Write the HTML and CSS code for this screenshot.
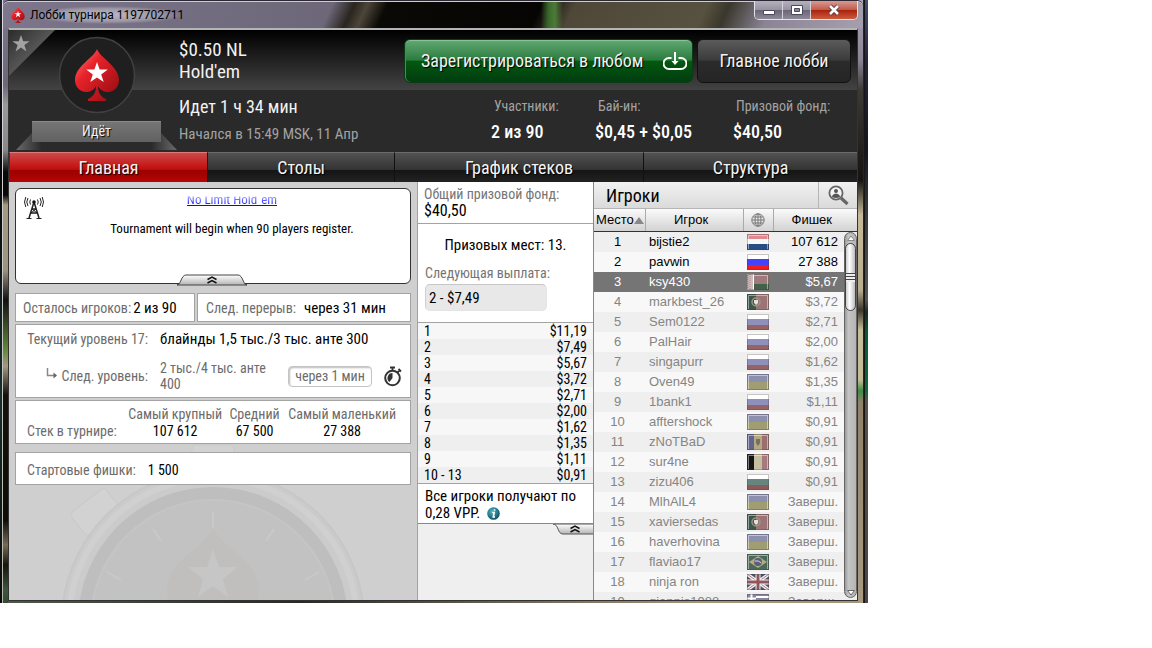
FILE: index.html
```
<!DOCTYPE html>
<html lang="ru">
<head>
<meta charset="utf-8">
<title>Лобби турнира 1197702711</title>
<link rel="stylesheet" href="styles.css">
</head>
<body>
<svg class="defs" aria-hidden="true">
  <defs>
    <linearGradient id="red" x1="0" y1="0" x2="1" y2="1"><stop offset="0" stop-color="#ff8a80"/><stop offset=".35" stop-color="#e8222a"/><stop offset="1" stop-color="#8f0b10"/></linearGradient>
    <linearGradient id="corner" x1="0" y1="0" x2="1" y2="1"><stop offset="0" stop-color="#2c2c2c"/><stop offset=".5" stop-color="#565656"/></linearGradient>
    <linearGradient id="ribbon" x1="0" y1="0" x2="0" y2="1"><stop offset="0" stop-color="#767676"/><stop offset="1" stop-color="#616161"/></linearGradient>
    <linearGradient id="tail" x1="0" y1="0" x2="1" y2="0"><stop offset="0" stop-color="#6a6a6a"/><stop offset="1" stop-color="#2c2c2c"/></linearGradient>
    <linearGradient id="tail2" x1="1" y1="0" x2="0" y2="0"><stop offset="0" stop-color="#6a6a6a"/><stop offset="1" stop-color="#2c2c2c"/></linearGradient>
    <linearGradient id="grip" x1="0" y1="0" x2="0" y2="1"><stop offset="0" stop-color="#fff"/><stop offset="1" stop-color="#b4b4b4"/></linearGradient>
    <radialGradient id="info" cx=".4" cy=".35" r=".7"><stop offset="0" stop-color="#4fb6c6"/><stop offset="1" stop-color="#0b4a5e"/></radialGradient>
    <path id="gloss" d="M1.500 15V1.500h19V15" fill="none" stroke="#fff" stroke-opacity=".45"/>
    <symbol id="spade" viewBox="0 0 46 52"><path d="M23 0C26 9 45 17 45 31c0 8-6 12-11 12-4 0-8-2-10-6 0 7 3 11 8 13v2H14v-2c5-2 8-6 8-13-2 4-6 6-10 6C7 43 1 39 1 31 1 17 20 9 23 0z" fill="url(#red)"/><path d="M23 13l2.600 7.600h8.200l-6.600 4.800 2.500 7.700-6.700-4.700-6.700 4.700 2.500-7.700-6.600-4.800h8.200z" fill="#fff"/></symbol>
    <symbol id="ru" viewBox="0 0 22 16"><path fill="#fff" d="M0 0h22v5H0z"/><path fill="#9090bd" d="M0 5h22v6H0z"/><path fill="#976464" d="M0 11h22v5H0z"/></symbol>
    <symbol id="ru-on" viewBox="0 0 22 16"><path fill="#fff" d="M0 0h22v5H0z"/><path fill="#4343fb" d="M0 5h22v6H0z"/><path fill="#f31b1b" d="M0 11h22v5H0z"/></symbol>
    <symbol id="nl" viewBox="0 0 22 16"><path fill="#df8a90" d="M0 0h22v5H0z"/><path fill="#f4f6f7" d="M0 5h22v5H0z"/><path fill="#274c85" d="M0 10h22v6H0z"/><use href="#gloss"/></symbol>
    <symbol id="by" viewBox="0 0 22 16"><path fill="#9d7b7c" d="M0 0h22v10H0z"/><path fill="#436048" d="M0 10h22v6H0z"/><use href="#gloss"/><path fill="#cdbcbc" d="M0 0h6v16H0z"/><path d="M1 1v14M3 0v16" stroke="#a98585" stroke-dasharray="1 1"/><path fill="#fff" d="M6 0h1v16H6z"/></symbol>
    <symbol id="pt" viewBox="0 0 22 16"><path fill="#9d7476" d="M0 0h22v16H0z"/><path fill="#3c564b" d="M0 0h9v16H0z"/><circle cx="9" cy="8" r="4" fill="none" stroke="#99987a" stroke-width="1.500"/><path fill="#e4dfe4" d="M7 6h4v3l-2 2-2-2z"/><use href="#gloss"/></symbol>
    <symbol id="ua" viewBox="0 0 22 16"><path fill="#8d8fae" d="M0 0h22v8H0z"/><path fill="#a19d72" d="M0 8h22v8H0z"/><use href="#gloss"/></symbol>
    <symbol id="md" viewBox="0 0 22 16"><path fill="#61658d" d="M0 0h7v16H0z"/><path fill="#b3aa82" d="M7 0h8v16H7z"/><path fill="#9b6e70" d="M15 0h7v16h-7z"/><path fill="#78705c" d="M9 5h4v4l-2 3-2-3z"/><use href="#gloss"/></symbol>
    <symbol id="be" viewBox="0 0 22 16"><path fill="#151515" d="M0 0h7v16H0z"/><path fill="#c4bfa0" d="M7 0h8v16H7z"/><path fill="#a5797e" d="M15 0h7v16h-7z"/><use href="#gloss"/></symbol>
    <symbol id="bg" viewBox="0 0 22 16"><path fill="#fff" d="M0 0h22v5H0z"/><path fill="#668580" d="M0 5h22v6H0z"/><path fill="#8d5959" d="M0 11h22v5H0z"/></symbol>
    <symbol id="br" viewBox="0 0 22 16"><path fill="#49695a" d="M0 0h22v16H0z"/><path fill="#b6aa7d" d="M11 2l9 6-9 6-9-6z"/><circle cx="11" cy="8" r="4" fill="#59607e"/><path d="M7.500 7q4-1 7 2" stroke="#d7d8de" fill="none"/><use href="#gloss"/></symbol>
    <symbol id="gb" viewBox="0 0 22 16"><path fill="#4a5068" d="M0 0h22v16H0z"/><path d="M0 0l22 16M22 0L0 16" stroke="#f0eff1" stroke-width="3.500"/><path d="M0 0l22 16M22 0L0 16" stroke="#a67a7f"/><path d="M11 0v16M0 8h22" stroke="#f4f3f4" stroke-width="5"/><path d="M11 0v16M0 8h22" stroke="#91565b" stroke-width="3"/></symbol>
    <symbol id="gr" viewBox="0 0 22 16"><path fill="#fff" d="M0 0h22v16H0z"/><path d="M0 1h22M0 5h22M0 9h22M0 13h22" stroke="#8686a2" stroke-width="2"/><path fill="#8686a2" d="M0 0h9v9H0z"/><path d="M4.500 0v9M0 4.500h9" stroke="#fff" stroke-width="2"/></symbol>
  </defs>
</svg>
<div class="window">
  <header class="titlebar">
    <svg class="app-icon" viewBox="0 0 46 52"><use href="#spade"/></svg>
    <h1 class="caption">Лобби турнира 1197702711</h1>
    <div class="window-buttons">
      <button class="wb" aria-label="Свернуть"><svg width="14" height="12" viewBox="0 0 14 12"><path d="M1.500 6.500h11v4h-11z" fill="#fff" stroke="#4a4a5c"/></svg></button>
      <button class="wb" aria-label="Развернуть"><svg width="14" height="12" viewBox="0 0 14 12"><path d="M1.500 1.500h11v9h-11z" fill="#fff" stroke="#4a4a5c"/><path d="M4.500 4.500h5v3h-5z" fill="#8a8795" stroke="#4a4a5c"/></svg></button>
      <button class="wb wb-close" aria-label="Закрыть"><svg width="14" height="12" viewBox="0 0 14 12"><path d="M3 2l8 8M11 2l-8 8" stroke="#54353c" stroke-width="4.500"/><path d="M3 2l8 8M11 2l-8 8" stroke="#fff" stroke-width="2.600"/></svg></button>
    </div>
  </header>

  <main class="client">
    <section class="summary">
      <div class="emblem">
        <svg class="emblem-art" viewBox="0 0 170 122" aria-hidden="true">
          <path d="M0 0h46L0 46z" fill="url(#corner)"/>
          <path d="M12 5l2.200 6.200h6.400l-5.200 3.900 2 6.300-5.400-3.800-5.400 3.800 2-6.300-5.200-3.900h6.400z" fill="#a3a3a3"/>
          <circle cx="88" cy="45" r="37.500" fill="#1f1f1f" stroke="#414141" stroke-width="1.500"/>
          <use href="#spade" x="65" y="19" width="46" height="52"/>
          <path d="M7 120l16-17v9h9v8z" fill="url(#tail)"/>
          <path d="M168 120l-16-17v9h-9v8z" fill="url(#tail2)"/>
          <path d="M23 91.500h129V112H23z" fill="url(#ribbon)"/><path d="M23 91.500h129" stroke="#8a8a8a"/>
        </svg>
        <span class="status">Идёт</span>
      </div>
      <div class="summary-top">
        <h2 class="game">$0.50 NL<br>Hold'em</h2>
        <div class="actions">
          <button class="btn btn-register">Зарегистрироваться в любом
            <svg width="24" height="19" viewBox="0 0 24 19" fill="none" stroke="#fff" stroke-width="2"><path d="M8.500 6H6a5 5 0 0 0 0 11h12a5 5 0 0 0 0-11h-2.500M12 0v10"/><path d="M8.500 9h7L12 13z" fill="#fff" stroke="none"/></svg>
          </button>
          <button class="btn btn-lobby">Главное лобби</button>
        </div>
      </div>
      <div class="summary-bottom">
        <div class="timing">
          <p class="running">Идет 1 ч 34 мин</p>
          <p class="started">Начался в 15:49 MSK, 11 Апр</p>
        </div>
        <dl class="stats">
          <div><dt>Участники:</dt><dd>2 из 90</dd></div>
          <div><dt>Бай-ин:</dt><dd>$0,45 + $0,05</dd></div>
          <div><dt>Призовой фонд:</dt><dd>$40,50</dd></div>
        </dl>
      </div>
    </section>

    <nav class="tabs">
      <button class="tab tab-main active">Главная</button>
      <button class="tab tab-tables">Столы</button>
      <button class="tab tab-chart">График стеков</button>
      <button class="tab tab-structure">Структура</button>
    </nav>

    <div class="columns">
      <section class="details">
        <svg class="watermark" viewBox="0 0 408 418" preserveAspectRatio="xMidYMax slice" aria-hidden="true">
          <g fill="#d2d2d2" stroke="#c9c9c9"><rect x="183" y="263" width="42" height="40" rx="3"/><rect x="77" y="310" width="28" height="44" rx="4" transform="rotate(52 91 326)"/></g>
          <circle cx="204" cy="440" r="151" fill="#cbcbcb" stroke="#c7c7c7" stroke-width="2"/>
          <circle cx="204" cy="440" r="144" fill="none" stroke="#d0d0d0" stroke-width="6"/>
          <circle cx="204" cy="440" r="135" fill="#bebebe"/>
          <circle cx="204" cy="440" r="122" fill="#c2c2c2" stroke="#c5c5c5" stroke-width="2"/>
          <path d="M204 330v24M144 347l8 12M265 347l-8 12M98 390l14 8M310 390l-14 8" stroke="#c9c9c9" stroke-width="2"/>
          <path d="M204 345c7 20 46 34 46 62 0 18-10 25-22 25h-48c-12 0-22-7-22-25 0-28 39-42 46-62z" fill="#c1bfbe"/>
          <path d="M204 367l6 18h19l-15 12 5 18-15-11-15 11 5-18-15-12h19z" fill="#c6c6c6"/>
        </svg>

        <div class="news">
          <svg class="antenna" width="20" height="24" viewBox="0 0 20 24" fill="none" stroke="#222"><path d="M10 6L5 22M10 6l5 16M8 13h4M7 17h6" stroke-width="1.500"/><path d="M8 13l5 4M12 13l-5 4M2.500 22.500h5M12.500 22.500h5"/><circle cx="10" cy="6" r="1.800" fill="#111" stroke="none"/><path d="M6.500 3.500q-1.500 2.500 0 5M13.500 3.500q1.500 2.500 0 5M4 2q-2.500 4 0 8M16 2q2.500 4 0 8M1.800 1q-2.600 5 0 10M18.200 1q2.600 5 0 10"/></svg>
          <div class="news-body">
            <a class="news-link" href="#rules">No Limit Hold`em</a>
            <p>Tournament will begin when 90 players register.</p>
          </div>
          <button class="collapse" aria-label="Свернуть новости"><svg width="70" height="12" viewBox="0 0 70 12"><path d="M0 11c4 0 4-10 9-10h52c5 0 5 10 9 10z" fill="url(#grip)" stroke="#444"/><path d="M30.500 5.500L35 3l4.500 2.500M30.500 9L35 6.500 39.500 9" fill="none" stroke="#111" stroke-width="1.500"/></svg></button>
        </div>

        <div class="pair">
          <p class="card remaining"><span>Осталось игроков:</span> <b>2 из 90</b></p>
          <p class="card break"><span>След. перерыв:</span> <b>через 31 мин</b></p>
        </div>

        <div class="card levels">
          <span class="level-label">Текущий уровень 17:</span><b class="level-now">блайнды 1,5 тыс./3 тыс. анте 300</b>
          <span class="level-label"><svg width="12" height="12" viewBox="0 0 12 12" fill="none" stroke="#888" stroke-width="1.500"><path d="M1.500 0v7.500H10"/><path d="M7.500 4.500L11 7.500l-3.500 3z" fill="#666" stroke="none"/></svg>След. уровень:</span>
          <span class="level-next">2 тыс./4 тыс. анте 400</span>
          <span class="countdown">через 1 мин</span>
          <svg class="stopwatch" width="18" height="21" viewBox="0 0 18 21" fill="none" stroke="#333"><circle cx="8.500" cy="12" r="7.300" stroke-width="2"/><path d="M8.500 7v5l-3 4A5 5 0 0 1 8.500 7z" fill="#333" stroke="none"/><path d="M6 1.500h5M8.500 1v4M14.500 3l2.500 2.500M13.500 6.500L16 4" stroke-width="1.800"/></svg>
        </div>

        <table class="card stacks">
          <tr><td></td><th>Самый крупный</th><th>Средний</th><th>Самый маленький</th></tr>
          <tr><th class="stack-label">Стек в турнире:</th><td>107 612</td><td>67 500</td><td>27 388</td></tr>
        </table>

        <p class="card chips"><span>Стартовые фишки:</span> <b>1 500</b></p>
      </section>

      <section class="prizes">
        <div class="pool"><span class="muted">Общий призовой фонд:</span><strong>$40,50</strong></div>
        <p class="places">Призовых мест: 13.</p>
        <div class="next-payout"><label class="muted" for="payout">Следующая выплата:</label><input id="payout" class="payout-field" value="2 - $7,49" readonly></div>
        <table class="payouts">
          <tr><td>1</td><td>$11,19</td></tr>
          <tr><td>2</td><td>$7,49</td></tr>
          <tr><td>3</td><td>$5,67</td></tr>
          <tr><td>4</td><td>$3,72</td></tr>
          <tr><td>5</td><td>$2,71</td></tr>
          <tr><td>6</td><td>$2,00</td></tr>
          <tr><td>7</td><td>$1,62</td></tr>
          <tr><td>8</td><td>$1,35</td></tr>
          <tr><td>9</td><td>$1,11</td></tr>
          <tr><td>10 - 13</td><td>$0,91</td></tr>
        </table>
        <p class="vpp">Все игроки получают по 0,28 VPP. <svg width="13" height="13" viewBox="0 0 13 13"><circle cx="6.500" cy="6.500" r="6.300" fill="url(#info)"/><path d="M7.600 2.200v1.600M5.200 5.500h2L6.300 10H8" stroke="#fff" stroke-width="1.600" fill="none"/></svg></p>
        <button class="fold" aria-label="Свернуть"><svg width="40" height="11" viewBox="0 0 40 11"><path d="M0 0c6 0 4 10 10 10h31V0z" fill="url(#grip)" stroke="#555"/><path d="M17.500 4.500L22 2l4.500 2.500M17.500 8L22 5.500 26.500 8" fill="none" stroke="#111" stroke-width="1.500"/></svg></button>
      </section>

      <section class="players">
        <div class="players-head">
          <h2>Игроки</h2>
          <button class="search" aria-label="Найти игрока"><svg width="21" height="21" viewBox="0 0 21 21" fill="none" stroke="#666"><path d="M13 13l6.500 6" stroke-width="3.200"/><circle cx="8" cy="8" r="6.600" fill="#f4f4f4" stroke-width="1.800"/><circle cx="8" cy="6" r="2" fill="#555" stroke="none"/><path d="M4 12q0-3 4-3.500Q12 9 12 12 8 14 4 12z" fill="#555" stroke="none"/></svg></button>
        </div>
        <table class="roster">
          <thead><tr><th>Место<i class="sort"></i></th><th>Игрок</th><th><svg width="14" height="14" viewBox="0 0 14 14" fill="none" stroke="#777"><circle cx="7" cy="7" r="6.200"/><ellipse cx="7" cy="7" rx="3" ry="6.200"/><path d="M7 1v12M1 7h12M2 4h10M2 10h10"/></svg></th><th>Фишек</th></tr></thead>
          <tbody>
            <tr class="live"><td>1</td><td>bijstie2</td><td><svg class="flag"><use href="#nl"/></svg></td><td>107 612</td></tr>
            <tr class="live"><td>2</td><td>pavwin</td><td><svg class="flag"><use href="#ru-on"/></svg></td><td>27 388</td></tr>
            <tr class="selected"><td>3</td><td>ksy430</td><td><svg class="flag"><use href="#by"/></svg></td><td>$5,67</td></tr>
            <tr><td>4</td><td>markbest_26</td><td><svg class="flag"><use href="#pt"/></svg></td><td>$3,72</td></tr>
            <tr><td>5</td><td>Sem0122</td><td><svg class="flag"><use href="#ru"/></svg></td><td>$2,71</td></tr>
            <tr><td>6</td><td>PalHair</td><td><svg class="flag"><use href="#ru"/></svg></td><td>$2,00</td></tr>
            <tr><td>7</td><td>singapurr</td><td><svg class="flag"><use href="#ru"/></svg></td><td>$1,62</td></tr>
            <tr><td>8</td><td>Oven49</td><td><svg class="flag"><use href="#ua"/></svg></td><td>$1,35</td></tr>
            <tr><td>9</td><td>1bank1</td><td><svg class="flag"><use href="#ru"/></svg></td><td>$1,11</td></tr>
            <tr><td>10</td><td>afftershock</td><td><svg class="flag"><use href="#ua"/></svg></td><td>$0,91</td></tr>
            <tr><td>11</td><td>zNoTBaD</td><td><svg class="flag"><use href="#md"/></svg></td><td>$0,91</td></tr>
            <tr><td>12</td><td>sur4ne</td><td><svg class="flag"><use href="#be"/></svg></td><td>$0,91</td></tr>
            <tr><td>13</td><td>zizu406</td><td><svg class="flag"><use href="#bg"/></svg></td><td>$0,91</td></tr>
            <tr><td>14</td><td>MlhAlL4</td><td><svg class="flag"><use href="#ua"/></svg></td><td>Заверш.</td></tr>
            <tr><td>15</td><td>xaviersedas</td><td><svg class="flag"><use href="#pt"/></svg></td><td>Заверш.</td></tr>
            <tr><td>16</td><td>haverhovina</td><td><svg class="flag"><use href="#ua"/></svg></td><td>Заверш.</td></tr>
            <tr><td>17</td><td>flaviao17</td><td><svg class="flag"><use href="#br"/></svg></td><td>Заверш.</td></tr>
            <tr><td>18</td><td>ninja ron</td><td><svg class="flag"><use href="#gb"/></svg></td><td>Заверш.</td></tr>
            <tr><td>19</td><td>giannis1988</td><td><svg class="flag"><use href="#gr"/></svg></td><td>Заверш.</td></tr>
          </tbody>
        </table>
        <div class="scrollbar"><svg width="10" height="9" viewBox="0 0 10 9"><path d="M1.500 6.500L5 2l3.500 4.500z" fill="#fff" stroke="#888"/></svg><span class="thumb"></span><svg class="down" width="10" height="9" viewBox="0 0 10 9"><path d="M1.500 2.500L5 7l3.500-4.500z" fill="#fff" stroke="#666"/></svg></div>
      </section>
    </div>
  </main>
</div>
</body>
</html>
```
FILE: styles.css
```
* { box-sizing: border-box; }
body {
  margin: 0;
  padding-right: 284px;
  background: #fff;
  color: #000;
  font: 14px/16px "Roboto Condensed", Roboto, sans-serif;
}
h1, h2, p, dl, dd { margin: 0; font-weight: 400; }
b, th, strong { font-weight: 400; }
button { border: 0; padding: 0; background: none; font: inherit; color: inherit; }
svg { display: block; flex: none; }
table { border-collapse: collapse; }
th, td { padding: 0; }
.defs { position: absolute; width: 0; height: 0; }

/* Window frame */
.window {
  display: flex;
  flex-direction: column;
  height: calc(100vh - 45px);
  min-height: 560px;
  padding: 0 10px 2px 8px;
  background:
    linear-gradient(#4a4a72 0, #24243c 60px, #15151c 150px, #3c3c3c 220px, #555 300px, #1d2a20 312px, #075a30 330px, #0b6b35 390px, #5b514b 400px, #4b4440 100%) right / 3px 100% no-repeat,
    linear-gradient(90deg, #2a2a35, #111) right 3px top / 2px 100% no-repeat,
    linear-gradient(#aaa4b4 0, #8a8496 60px, #3b3a35 90px, #15130f 180px, #c5b99a 215px, #b9ad90 290px, #3c372c 310px, #c5bd9b 330px, #c3ba98 380px, #3f8a45 391px, #8f8269 402px, #a89a80 100%) right 5px top / 5px 100% no-repeat,
    linear-gradient(#1c1c26, #060606 170px, #14302c 400px, #070b0b) left / 2px 100% no-repeat,
    linear-gradient(#dcdae4, #bdb8aa) 2px 0 / 1px 100% no-repeat,
    linear-gradient(#7f788d 0, #6d6779 85px, #999 105px, #888 150px, #0a0a0a 172px, #080808 195px, #a49a80 205px, #9d9480 270px, #111 300px, #62883a 350px, #a29a80 366px, #14110c 395px, #0d0c08 520px, #7a6a56 545px, #15150f 565px, #3e5540 590px, #334a36 100%) 3px 0 / 5px 100% no-repeat,
    linear-gradient(90deg, #4b5a48, #2a2a25 300px, #a49478 700px) #444;
}
.titlebar {
  display: flex;
  align-items: center;
  flex: none;
  height: 28px;
  margin: 0 -5px;
  padding-left: 7px;
  border-top: 1px solid #2a2833;
  border-radius: 6px 6px 0 0;
  box-shadow: inset 0 1px #cfccd8;
  background:
    linear-gradient(90deg, transparent 538px, #3b6b2c 546px, #4d7a38 552px, transparent 560px),
    linear-gradient(115deg, #7d768c 0, #6d6779 300px, #2a251f 320px, #4c4539 332px, #0b0906 350px, #070503 490px, #4f4839 520px, #57513f 640px, #3a372c 660px, #8a8496 700px, #a29cac 780px);
}
.app-icon { width: 16px; height: 16px; }
.caption {
  margin-left: 4px;
  font: 12px/18px Roboto, sans-serif;
  background: radial-gradient(closest-side, rgba(255,255,255,.5), rgba(255,255,255,.28) 70%, transparent);
}
.window-buttons {
  display: flex;
  align-self: flex-start;
  margin: 0 5px 0 auto;
  border: 1px solid #e4e2ea;
  border-top: 0;
  border-radius: 0 0 5px 5px;
  overflow: hidden;
}
.wb {
  display: grid;
  place-items: center;
  width: 28px;
  height: 18px;
  border-right: 1px solid #d5d2dc;
  background: linear-gradient(#b5b0be, #97929f 50%, #6b6675 51%, #8e8998);
}
.wb-close { width: 46px; border: 0; background: linear-gradient(#d99a90, #c1594a 50%, #a8230f 51%, #cc5a3c); }

.client {
  display: flex;
  flex-direction: column;
  flex: 1;
  min-height: 0;
  border: 1px solid #333;
  border-top: 2px solid #b5b5b5;
  background: #cfcfcf;
}

/* Summary */
.summary {
  display: grid;
  grid-template-columns: 170px 1fr;
  grid-template-rows: 60px 62px;
  flex: none;
  background: linear-gradient(#000, #434343) top / 100% 60px no-repeat #2a2a2a;
  color: #f2f2f2;
}
.emblem { position: relative; grid-row: span 2; display: flex; align-items: flex-end; padding: 0 18px 10px 23px; }
.emblem-art { position: absolute; inset: 0; width: 100%; height: 100%; }
.status { position: relative; flex: 1; text-align: center; line-height: 22px; text-shadow: 1px 1px 1px #000; }
.summary-top { display: flex; justify-content: space-between; align-items: center; padding: 2px 6px 0 0; }
.game { font-size: 19px; line-height: 22px; }
.actions { display: flex; gap: 4px; }
.btn {
  display: flex;
  align-items: center;
  justify-content: space-between;
  height: 44px;
  padding: 0 5px 0 16px;
  border: 1px solid #111;
  border-radius: 6px;
  font-size: 18px;
  text-shadow: 1px 1px 1px #000;
}
.btn-register { width: 289px; border-color: #0c3a16; background: linear-gradient(#62a873, #2b7c3e 48%, #04590f 50%, #003d10); box-shadow: inset 0 1px #85c694, inset 1px 0 #3f9350; }
.btn-lobby { width: 154px; justify-content: center; padding: 0; background: linear-gradient(#5b5b5b, #3b3b3b 48%, #2b2b2b 50%, #252525); }
.summary-bottom { display: flex; justify-content: space-between; padding-top: 6px; }
.running { font-size: 18px; line-height: 22px; }
.started { font-size: 15px; line-height: 32px; color: #a3a3a3; }
.stats { display: grid; grid-template-columns: 104px 138px 124px; }
.stats dt { padding-left: 3px; font-size: 14px; line-height: 20px; color: #a3a3a3; }
.stats dd { padding-top: 4px; font-size: 18px; font-weight: 500; line-height: 24px; color: #fff; }

/* Tabs */
.tabs { display: flex; flex: none; height: 30px; }
.tab {
  flex: 1 1 0;
  border-left: 1px solid #111;
  border-top: 1px solid #6b6b6b;
  background: linear-gradient(#525252, #333 58%, #151515 60%, #222);
  color: #f4f4f4;
  font-size: 18px;
  text-shadow: 1px 1px 1px #000;
}
.tab-main { flex-grow: 198; }
.tab-tables { flex-grow: 187; }
.tab-chart { flex-grow: 249; }
.tab-structure { flex-grow: 214; }
.tab.active { border-left-color: #b00; border-top-color: #e07a7a; background: linear-gradient(#cc4a4a, #c40a0a 58%, #9c0000 60%, #b50505); }

/* Columns */
.columns { display: grid; grid-template-columns: 1fr 176px 264px; flex: 1; min-height: 0; overflow: hidden; }
.details { position: relative; display: flex; flex-direction: column; gap: 2px; padding: 6px; overflow: hidden; }
.watermark { position: absolute; inset: 0; width: 100%; height: 100%; }
.card, .news { position: relative; background: #fff; }
.card { border: 1px solid #a3a3a3; color: #6c6c6c; }
.card b { color: #000; }
.news { display: flex; height: 96px; margin-bottom: 7px; padding: 7px 8px; border: 1px solid #333; border-radius: 6px; }
.news-body { flex: 1; padding-left: 18px; text-align: center; font-size: 13px; line-height: 16px; }
.news-body p { margin-top: 13px; }
.news-link { display: block; width: max-content; margin: -4px auto 0; color: #00f; text-decoration-skip-ink: none; -webkit-mask: linear-gradient(transparent 4px, rgba(0,0,0,.4) 5px, #000 14px); mask: linear-gradient(transparent 4px, rgba(0,0,0,.4) 5px, #000 14px); white-space: nowrap; }
.collapse { position: absolute; bottom: -3px; left: 50%; margin-left: -36px; }
.pair { display: grid; grid-template-columns: 180fr 214fr; gap: 2px; }
.pair .card { display: flex; align-items: center; gap: 2px; height: 29px; padding-left: 7px; white-space: nowrap; }
.pair .break { gap: 8px; padding-left: 8px; }
.pair b, .level-now { font-size: 15px; }
.levels {
  display: grid;
  grid-template-columns: 122px 116px 84px 1fr;
  grid-template-rows: 28px 46px;
  align-items: center;
  column-gap: 12px;
  height: 74px;
  padding-left: 10px;
}
.level-now { grid-column: 2 / -1; }
.level-label { display: flex; justify-content: flex-end; gap: 3px; }
.countdown { display: flex; align-items: center; justify-content: center; height: 21px; border: 1px solid #c4c4c4; border-radius: 4px; box-shadow: inset 1px 1px 2px #bbb; }
.stacks { display: table; width: 100%; height: 44px; }
.stacks tr:first-child > * { padding-top: 5px; }
.stacks td { color: #000; text-align: center; padding-bottom: 4px; }
.stacks .stack-label { width: 108px; padding: 0 0 4px 11px; text-align: left; white-space: nowrap; }
.stacks th { white-space: nowrap; }
.stacks tr > :last-child { padding-right: 8px; }
.chips { display: flex; align-items: center; gap: 12px; height: 33px; margin-top: 6px; padding: 3px 0 0 11px; }

.muted { color: #757575; }
.prizes { display: flex; flex-direction: column; align-items: stretch; border-left: 1px solid #a3a3a3; background: linear-gradient(#fff, #fff) top / 100% 341px no-repeat #efefef; }
.pool { display: flex; flex-direction: column; height: 42px; padding: 4px 0 0 6px; border-bottom: 1px solid #a3a3a3; }
.pool strong { font-size: 16px; line-height: 18px; }
.places { padding: 13px 0 0; font-size: 15px; text-align: center; }
.next-payout { display: grid; gap: 3px; padding: 12px 7px 11px; }
.payout-field { width: 122px; height: 27px; padding: 0 3px; border: 1px solid #d5d5d5; border-color: #c6c6c6 #e4e4e4 #e4e4e4 #d0d0d0; border-radius: 5px; background: #e8e8e8; font: inherit; font-size: 15px; }
.payouts { border-top: 1px solid #a3a3a3; border-bottom: 1px solid #a3a3a3; background: #f7f7f7; }
.payouts tr { height: 16px; }
.payouts tr:nth-child(even) { background: #efefef; }
.payouts td { padding-left: 6px; line-height: 16px; }
.payouts td:last-child { padding: 0 6px 0 0; text-align: right; }
.vpp { padding: 4px 6px 1px 7px; border-bottom: 1px solid #888; font-size: 15px; line-height: 17px; }
.vpp svg { display: inline-block; margin-left: 3px; vertical-align: -2px; }
.fold { align-self: flex-end; }

/* Players */
.players { position: relative; border-left: 1px solid #888; overflow: hidden; background: #f8f8f8; font: 13px/20px "Liberation Sans", Arial, sans-serif; }
.players-head { display: flex; height: 27px; background: linear-gradient(#f2f2f2, #dadada); border-bottom: 1px solid #b5b5b5; }
.players-head h2 { flex: 1; padding-left: 12px; font: 18px/27px "Roboto Condensed", Roboto, sans-serif; }
.search { display: grid; place-items: center; width: 39px; border-left: 1px solid #b5b5b5; }
.roster { width: 100%; table-layout: fixed; }
.roster th { height: 22px; padding: 0; line-height: 19px; border-right: 1px solid #aaa; border-bottom: 1px solid #333; background: linear-gradient(#fafafa, #e6e6e6 50%, #d2d2d2); }
.roster th:first-child { width: 51px; text-align: left; padding-left: 2px; white-space: nowrap; }
.roster th:nth-child(2) { width: 98px; padding-right: 6px; }
.roster th:nth-child(3) { width: 30px; }
.roster th:last-child { padding-right: 7px; border-right: 0; }
.roster th svg { margin: auto; }
.sort { display: inline-block; border: 5px solid transparent; border-top: 0; border-bottom: 7px solid #888; }
.roster tbody tr { height: 20px; color: #858585; }
.roster tbody tr:nth-child(odd) { background: #efefef; }
.roster tbody tr.live { color: #000; }
.roster tbody tr.selected { color: #fff; background: #757575; }
.roster td { line-height: 20px; }
.roster td:first-child { text-align: center; padding-right: 4px; }
.roster td:nth-child(2) { padding-left: 4px; }
.roster td:last-child { padding-right: 19px; text-align: right; }
.flag { width: 22px; height: 16px; margin: 0 auto; outline: 1px solid rgba(70,60,60,.3); outline-offset: -1px; }
.scrollbar { position: absolute; top: 50px; right: 0; bottom: 2px; display: flex; flex-direction: column; align-items: center; width: 13px; padding-top: 1px; border: 1px solid #666; border-radius: 7px; background: linear-gradient(90deg, #999, #c4c4c4 30%, #b5b5b5); }
.thumb { width: 11px; height: 68px; border: 1px solid #444; border-radius: 6px; background: repeating-linear-gradient(#444 0 1px, #eee 1px 3px) center / 9px 9px no-repeat, linear-gradient(90deg, #ccc, #fff 40%, #bbb); }
.down { margin-top: auto; }
```
